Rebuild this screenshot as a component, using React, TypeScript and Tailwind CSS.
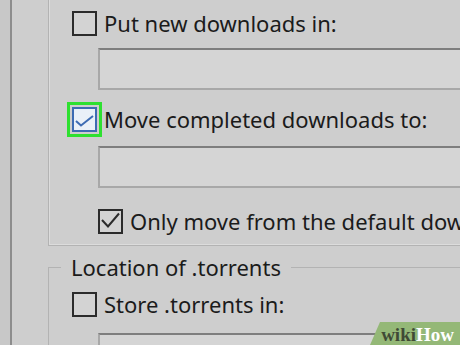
const CheckMark = ({ color }: { color: string }) => (
  <svg width="21" height="21" viewBox="0 0 21 21" fill="none">
    <path d="M2 9 L8 15.5 L19 2.5" stroke={color} strokeWidth="2" />
  </svg>
);

type BoxProps = {
  checked?: boolean;
  focused?: boolean;
};

const Box = ({ checked, focused }: BoxProps) => {
  if (focused) {
    return (
      <span className="w-[25px] h-[25px] shrink-0 border-2 border-[#3d6bb3] bg-[#eaf0f8] outline-3 outline-offset-2 outline-[#2ee030] flex items-center justify-center">
        <svg width="21" height="21" viewBox="0 0 21 21" fill="none">
          <path d="M2 12 L7 16.5 L19 7" stroke="#3d6bb3" strokeWidth="2" />
        </svg>
      </span>
    );
  }
  return (
    <span className="w-[25px] h-[25px] shrink-0 border-2 border-[#2b2b2b] bg-[#d3d3d3] flex items-center justify-center">
      {checked && <CheckMark color="#2b2b2b" />}
    </span>
  );
};

const Row = ({ label, checked, focused }: BoxProps & { label: string }) => (
  <div className="flex items-center gap-[7px] h-[25px] whitespace-nowrap">
    <Box checked={checked} focused={focused} />
    <span>{label}</span>
  </div>
);

const Field = ({ className }: { className: string }) => (
  <div className={"w-[380px] h-[42px] shrink-0 border-2 border-[#a8a8a8] border-t-[#7e7e7e] bg-[#d5d5d5] " + className} />
);

export default function App() {
  return (
    <div className="w-[460px] h-[345px] overflow-hidden bg-[#cecece] flex relative text-[22px] leading-[25px] text-[#1b1b1b] font-['Noto_Sans','Open_Sans',sans-serif]">
      <div className="w-[12px] shrink-0 bg-[#c8c8c8] border-r-2 border-[#8d8d8d]" />
      <div className="flex-1 pl-[36px] flex flex-col">
        <div className="border-l border-b border-[#b3b3b3] shadow-[inset_1px_-1px_0_#dcdcdc] pl-[23px] pt-[11px] pb-[11px] flex flex-col">
          <Row label="Put new downloads in:" />
          <Field className="mt-[12px] ml-[26px]" />
          <div className="mt-[17px]">
            <Row label="Move completed downloads to:" focused />
          </div>
          <Field className="mt-[14px] ml-[26px]" />
          <div className="mt-[21px] ml-[26px]">
            <Row label="Only move from the default download folder" checked />
          </div>
        </div>
        <fieldset className="mt-[6px] border-l border-t border-[#b3b3b3] pl-[12px] min-w-0">
          <legend className="px-[10px] leading-[30px]">Location of .torrents</legend>
          <div className="pl-[11px] mt-[10px] flex flex-col">
            <Row label="Store .torrents in:" />
            <Field className="mt-[16px] ml-[26px]" />
          </div>
        </fieldset>
      </div>
      <div className="absolute right-0 bottom-0 w-[90px] h-[23px] bg-[#94b877] [clip-path:polygon(10px_0,100%_0,100%_100%,0_100%)] flex items-center justify-end pr-[6px] pt-[2px] font-['Liberation_Serif',serif] font-bold text-[19px] leading-none">
        <span className="text-[#3f4a35]">wiki</span>
        <span className="text-white">How</span>
      </div>
    </div>
  );
}
